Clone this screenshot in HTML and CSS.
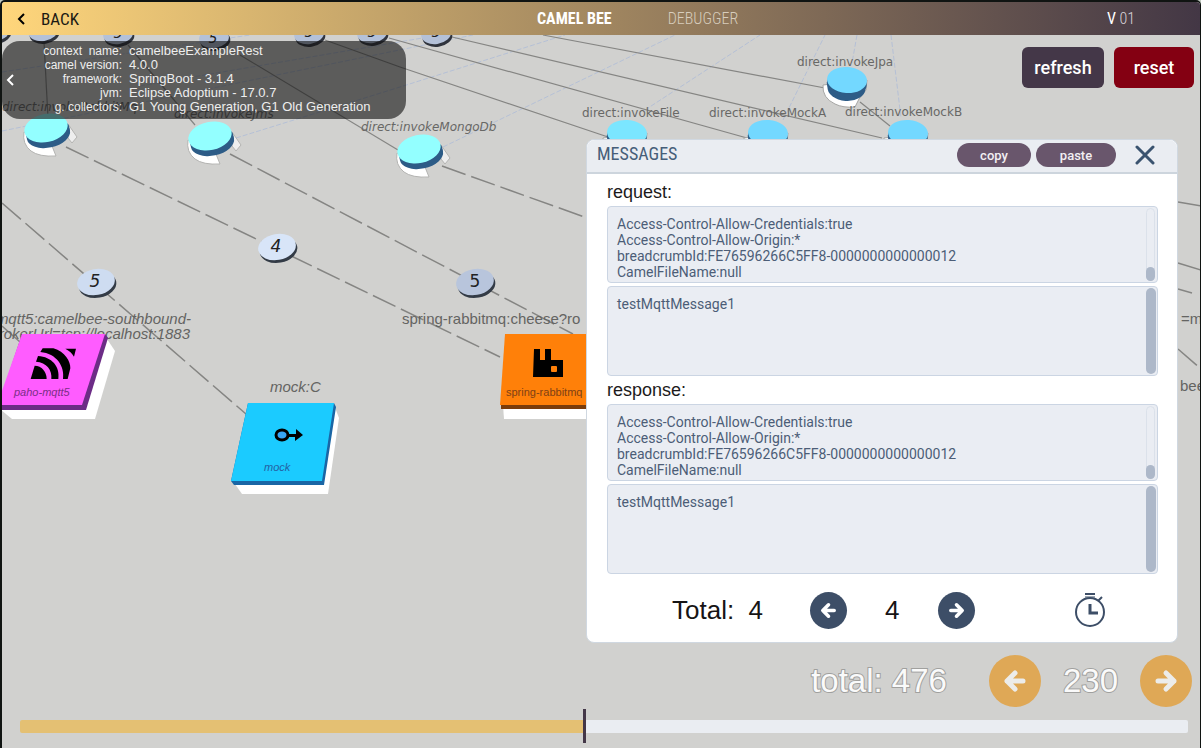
FILE: index.html
```html
<!DOCTYPE html>
<html lang="en">
<head>
<meta charset="utf-8">
<meta name="viewport" content="width=device-width, initial-scale=1">
<title>Camel Bee Debugger</title>
<link rel="stylesheet" href="styles.css">
</head>
<body>
<div class="app">
  <svg class="scene" viewBox="0 0 1201 748" preserveAspectRatio="xMidYMid slice" role="img" aria-label="Route topology">
    <defs>
      <g id="endpoint">
        <path d="M-22 4 Q-24 16 -15 23 Q-7 29 10 28 L6 18Z" fill="#fff" stroke="#b4b4b2"/>
        <path d="M22 -4 L31 9 L26 15 L22 10Z" fill="#eee" stroke="#b4b4b2"/>
        <ellipse cx="1" cy="7" rx="22" ry="13" fill="#2d5c87" transform="rotate(-12)"/>
        <ellipse cx="1" cy="4" rx="22" ry="13" fill="#2d5c87" transform="rotate(-12)"/>
        <ellipse rx="22" ry="14" transform="rotate(-12)"/>
      </g>
      <g id="endpoint-far">
        <path d="M-24 5 Q-25 18 -12 24 Q-4 28 8 27 L12 19 L19 10 L20 0Z" fill="#fff" stroke="#a5a5a3"/>
        <ellipse cy="8" rx="19" ry="13" fill="#2d5c87" transform="rotate(4)"/>
        <ellipse cy="4" rx="20" ry="13" fill="#2d5c87" transform="rotate(4)"/>
        <ellipse rx="20" ry="13" transform="rotate(4)"/>
      </g>
      <g id="counter">
        <ellipse cx="1" cy="3" rx="19" ry="13" fill="#333b46" transform="rotate(-10)"/>
        <ellipse rx="19" ry="13" transform="rotate(-10)"/>
      </g>
      <g id="counter-far">
        <ellipse cx="1" cy="3" rx="15" ry="10" fill="#30343d" transform="rotate(-8)"/>
        <ellipse rx="15" ry="10" fill="#b4c1d8" transform="rotate(-8)"/>
      </g>
    </defs>

    <g class="grid-lines">
      <path d="M2 72 L250 35"/><path d="M2 131 L473 35"/><path d="M140 86 L440 35"/>
      <path d="M236 138 L400 87 L565 35"/><path d="M443 147 L675 35"/>
      <path d="M645 110 L760 35"/><path d="M783 120 L825 35"/>
      <path d="M857 35 L852 63"/><path d="M891 35 L901 118"/>
    </g>

    <g class="links links-far">
      <path d="M44 42 L48 118"/><path d="M128 45 L195 125"/><path d="M240 55 L398 150"/>
      <path d="M325 40 L400 67 L608 137"/><path d="M389 38 L747 138"/>
      <path d="M452 37 L882 138"/><path d="M543 35 L825 88"/><path d="M860 102 L890 126"/>
    </g>
    <g class="links">
      <path d="M2 203 L246 414"/><path d="M66 147 L500 357"/>
      <path d="M230 154 L573 334"/><path d="M442 166 L590 219"/>
      <path d="M1178 202 L1201 206"/><path d="M1178 263 L1201 270"/>
      <path d="M1178 289 L1192 293"/><path d="M1178 349 L1201 369"/>
      <path d="M2 326 L20 342"/>
    </g>

    <use href="#counter-far" x="-5" y="31"/><use href="#counter-far" x="43" y="31"/>
    <use href="#counter-far" x="118" y="34"/><use href="#counter-far" x="214" y="38"/>
    <use href="#counter-far" x="309" y="34"/><use href="#counter-far" x="372" y="33"/>
    <use href="#counter-far" x="436" y="34"/>
    <g class="counter-text counter-text-far">
      <text x="118" y="38">5</text><text x="213" y="43">5</text>
      <text x="309" y="37">5</text><text x="372" y="37">5</text><text x="436" y="37">5</text>
    </g>

    <g fill="#93ffff">
      <use href="#endpoint" x="46" y="128"/><use href="#endpoint" x="210" y="136"/>
      <use href="#endpoint" x="419" y="149"/>
    </g>
    <g fill="#73d8ff">
      <use href="#endpoint-far" x="847" y="80"/><use href="#endpoint-far" x="627" y="133" fill="#7be6ff"/>
      <use href="#endpoint-far" x="768" y="133"/><use href="#endpoint-far" x="908" y="133"/>
    </g>

    <use href="#counter" x="96" y="282" fill="#cedcf1"/>
    <use href="#counter" x="277" y="247" fill="#d8e5f8"/>
    <use href="#counter" x="475" y="282" fill="#b8c5dc"/>
    <g class="counter-text">
      <text x="95" y="287" class="slanted">5</text>
      <text x="276" y="252" class="slanted">4</text>
      <text x="475" y="287">5</text>
    </g>

    <g class="route-label">
      <text x="2" y="111" class="slanted">direct:invokeRabbitMq</text>
      <text x="174" y="118" class="slanted">direct:invokeJms</text>
      <text x="361" y="131" class="slanted">direct:invokeMongoDb</text>
      <text x="582" y="117">direct:invokeFile</text>
      <text x="709" y="117">direct:invokeMockA</text>
      <text x="845" y="116">direct:invokeMockB</text>
      <text x="797" y="66">direct:invokeJpa</text>
    </g>
    <g class="tile-label">
      <text x="191" y="324" text-anchor="end" class="slanted">mqtt5:camelbee-southbound-</text>
      <text x="190" y="339" text-anchor="end" class="slanted">brokerUrl=tcp://localhost:1883</text>
      <text x="270" y="392" class="slanted">mock:C</text>
      <text x="402" y="324">spring-rabbitmq:cheese?ro</text>
      <text x="1181" y="324">=m</text>
      <text x="1180" y="391">bee</text>
    </g>

    <path d="M105 336 L115 351 L95 419 L12 419 L0 409Z" fill="#fff"/>
    <path d="M22 334 H105 L108 338 L86 410 H0 V400Z" fill="#6c2c86"/>
    <path d="M22 334 H105 L82 405 H-3Z" fill="#ff5cff"/>
    <g transform="translate(0 180) scale(.3333)">
      <path d="M92 597 L104 557 C125 557 140 575 140 597Z"/>
      <path d="M114 528 C155 530 181 560 175 597 H154 C157 570 140 547 108 545Z"/>
      <path d="M128 505 H160 C195 515 212 545 211 565 L203 597 H189 C195 560 170 520 121 516Z"/>
      <path d="M196 506 H228 L222 530 C217 520 208 513 196 506Z"/>
    </g>
    <text x="14" y="396" class="tile-name" fill="#7a2f86">paho-mqtt5</text>

    <path d="M334 405 L339 418 L328 494 H242 L235 484Z" fill="#fff"/>
    <path d="M248 403 H334 L336 407 L324 485 H234 L231 481Z" fill="#1a66a5"/>
    <path d="M248 403 H334 L322 481 H231Z" fill="#1bcbff"/>
    <ellipse cx="282" cy="435" rx="6" ry="5" fill="#37a5f5" stroke="#000" stroke-width="3"/>
    <path d="M288 434 H296 V429 L303 435 L295 441 V437 H288Z"/>
    <text x="264" y="471" class="tile-name" fill="#2462a4">mock</text>

    <path d="M503 405 H600 V419 H504Z" fill="#fff"/>
    <path d="M501 404 H600 V409 H501Z" fill="#7b3c0a"/>
    <path d="M505 334 H600 V405 H500Z" fill="#ff8009"/>
    <path d="M534 349 H540 V360 H545 V349 H551 V360 H563 V377 H533Z"/>
    <rect x="551" y="366" width="6" height="6" rx="1" fill="#ff8009"/>
    <text x="506" y="396" class="tile-name upright" fill="#7e4116">spring-rabbitmq</text>
  </svg>

  <header class="topbar">
    <a class="back" href="#">
      <svg width="10" height="14" viewBox="0 0 10 14" aria-hidden="true"><path d="M8 2 L3 7 L8 12" fill="none" stroke="#000" stroke-width="2"/></svg>
      BACK
    </a>
    <nav class="tabs">
      <a class="tab tab-active" href="#">CAMEL BEE</a>
      <a class="tab" href="#">DEBUGGER</a>
    </nav>
    <div class="version"><b>V</b> 01</div>
  </header>

  <main class="stage">
    <div class="toolbar">
      <section class="context">
        <button class="collapse" aria-label="Collapse">
          <svg width="10" height="14" viewBox="0 0 10 14" aria-hidden="true"><path d="M8 2 L3 7 L8 12" fill="none" stroke="#fff" stroke-width="2"/></svg>
        </button>
        <dl class="facts">
          <dt>context&nbsp; name:</dt><dd>camelbeeExampleRest</dd>
          <dt>camel version:</dt><dd>4.0.0</dd>
          <dt>framework:</dt><dd>SpringBoot - 3.1.4</dd>
          <dt>jvm:</dt><dd>Eclipse Adoptium - 17.0.7</dd>
          <dt>g. collectors:</dt><dd>G1 Young Generation, G1 Old Generation</dd>
        </dl>
      </section>
      <div class="actions">
        <button class="action">refresh</button>
        <button class="action action-danger">reset</button>
      </div>
    </div>

    <section class="messages" aria-labelledby="messages-title">
      <div class="messages-head">
        <h2 id="messages-title">MESSAGES</h2>
        <button class="pill">copy</button>
        <button class="pill pill-wide">paste</button>
        <button class="close" aria-label="Close">
          <svg width="20" height="20" viewBox="0 0 20 20" aria-hidden="true"><path d="M2 2 L18 18 M18 2 L2 18" fill="none" stroke="#3a536f" stroke-width="3" stroke-linecap="round"/></svg>
        </button>
      </div>
      <div class="messages-body">
        <label for="request-headers">request:</label>
        <div class="field">
          <textarea id="request-headers" class="headers" readonly>Access-Control-Allow-Credentials:true
Access-Control-Allow-Origin:*
breadcrumbId:FE76596266C5FF8-0000000000000012
CamelFileName:null</textarea>
          <span class="scroll-track"></span>
          <span class="scroll scroll-end"></span>
        </div>
        <div class="field">
          <textarea class="payload" aria-label="request body" readonly>testMqttMessage1</textarea>
          <span class="scroll scroll-full"></span>
        </div>
        <label for="response-headers">response:</label>
        <div class="field">
          <textarea id="response-headers" class="headers" readonly>Access-Control-Allow-Credentials:true
Access-Control-Allow-Origin:*
breadcrumbId:FE76596266C5FF8-0000000000000012
CamelFileName:null</textarea>
          <span class="scroll-track"></span>
          <span class="scroll scroll-end"></span>
        </div>
        <div class="field">
          <textarea class="payload" aria-label="response body" readonly>testMqttMessage1</textarea>
          <span class="scroll scroll-full"></span>
        </div>
      </div>
      <div class="messages-foot">
        <span class="total">Total:&nbsp; 4</span>
        <button class="round" aria-label="Previous message">
          <svg viewBox="0 0 52 52" aria-hidden="true"><path d="M34 26 H18 M26 18 L18 26 L26 34" /></svg>
        </button>
        <span>4</span>
        <button class="round" aria-label="Next message">
          <svg viewBox="0 0 52 52" aria-hidden="true"><path d="M18 26 H34 M26 18 L34 26 L26 34" /></svg>
        </button>
        <button class="timer" aria-label="Timing">
          <svg width="32" height="36" viewBox="0 0 32 36" aria-hidden="true" fill="none" stroke="#3d4e67"><circle cx="16" cy="20" r="14" stroke-width="2"/><path d="M11 2 H21 M24 9 L28 5" stroke-width="2"/><path d="M11 5 H21" stroke-width="1"/><path d="M16 12 V21 H24" stroke-width="3"/></svg>
        </button>
      </div>
    </section>
  </main>

  <footer class="timeline">
    <div class="stepper">
      <span class="outlined">total: 476</span>
      <button class="round round-large" aria-label="Previous step">
        <svg viewBox="0 0 52 52" aria-hidden="true"><path d="M34 26 H18 M26 18 L18 26 L26 34" /></svg>
      </button>
      <span class="outlined">230</span>
      <button class="round round-large" aria-label="Next step">
        <svg viewBox="0 0 52 52" aria-hidden="true"><path d="M18 26 H34 M26 18 L34 26 L26 34" /></svg>
      </button>
    </div>
    <input class="seek" type="range" min="0" max="476" value="230" aria-label="Timeline position" style="--done: 48.3%">
  </footer>
</div>
</body>
</html>
```
FILE: styles.css
```css
* { box-sizing: border-box; }

body {
  margin: 0;
  background: #c3ccc2;
  font-family: "Liberation Sans", Arial, sans-serif;
}

button {
  border: 0;
  padding: 0;
  background: none;
  color: inherit;
  font-family: Roboto, sans-serif;
  cursor: pointer;
}

button svg { display: block; }
a { color: inherit; text-decoration: none; }

.app {
  position: relative;
  display: flex;
  flex-direction: column;
  min-height: 100vh;
  overflow: hidden;
  border: solid #101412;
  border-width: 2px 1px 0 2px;
  border-radius: 5px 5px 0 0;
  background: #d1d1cf;
}

/* Route topology */
.scene {
  position: absolute;
  top: -2px;
  left: -2px;
  width: 100vw;
  height: 100vh;
}

.grid-lines path { fill: none; stroke: #b5c0d6; stroke-dasharray: 5 2; }
.links path { fill: none; stroke: #858583; stroke-width: 1.5; stroke-dasharray: 25 6; }
.links-far path { stroke-dasharray: none; stroke-width: 1.2; }

.counter-text { font: 17px "DejaVu Sans", sans-serif; fill: #222; text-anchor: middle; }
.counter-text-far { font-size: 14px; font-style: italic; }
.route-label { font: 12px "DejaVu Sans", sans-serif; fill: #686866; }
.tile-label { font-size: 15px; fill: #646462; }
.slanted { font-style: italic; }
.tile-name { font-size: 11px; font-style: italic; }
.tile-name.upright { font-style: normal; }

/* Top bar */
.topbar {
  position: relative;
  display: grid;
  grid-template-columns: 535fr 570fr 93fr;
  align-items: center;
  height: 33px;
  background: linear-gradient(90deg, #ffd67b, #433745);
  color: #fff;
  font: 16px "Roboto Condensed", Roboto, sans-serif;
}

.back { display: flex; align-items: center; gap: 15px; padding-left: 14px; color: #1b1913; font-size: 17px; }
.tabs { display: flex; gap: 56px; }
.tab { color: #d8cdbd; font-weight: 300; }
.tab-active { color: #fff; font-weight: 700; }
.version { color: #d9d4d9; font-weight: 300; }
.version b { color: #fff; }

/* Stage */
.stage { position: relative; display: flex; flex-direction: column; flex: 1; }

.toolbar {
  display: flex;
  justify-content: space-between;
  align-items: flex-start;
  padding: 6px 6px 0 0;
}

.context {
  display: flex;
  align-items: center;
  width: 404px;
  height: 78px;
  border-radius: 18px;
  background: rgba(20, 20, 20, .62);
  color: #eee;
}

.collapse { flex: none; padding-left: 3px; }

.facts {
  display: grid;
  grid-template-columns: 107px auto;
  column-gap: 7px;
  margin: 0;
  padding-bottom: 2px;
  font-size: 13px;
  line-height: 14px;
  white-space: nowrap;
}

.facts dt { text-align: right; font-size: 12px; }
.facts dd { margin: 0; }

.actions { display: flex; gap: 10px; padding-top: 6px; }

.action {
  min-width: 82px;
  height: 41px;
  border-radius: 6px;
  background: #443748;
  color: #fff;
  font-size: 18px;
  font-weight: 500;
}

.action-danger { min-width: 80px; background: #840012; }

/* Messages window */
.messages {
  align-self: flex-end;
  width: 592px;
  max-width: 96vw;
  margin: 20px 22px 0 0;
  border: 1px solid #d0d8e1;
  border-radius: 8px;
  background: #fff;
}

.messages-head {
  display: flex;
  align-items: center;
  gap: 5px;
  height: 34px;
  padding: 0 22px 2px 10px;
  border-bottom: 2px solid #cdd5dd;
  border-radius: 8px 8px 0 0;
  background: #eaedf2;
}

.messages-head h2 {
  flex: 1;
  margin: 0;
  padding-bottom: 4px;
  color: #465e79;
  font: 18px "Roboto Condensed", Roboto, sans-serif;
}

.pill {
  min-width: 74px;
  height: 24px;
  border-radius: 12px;
  background: #69566c;
  color: #f2eff3;
  font-size: 13px;
  font-weight: 500;
}

.pill-wide { min-width: 80px; }
.close { margin-left: 14px; }

.messages-body { padding: 4px 19px 0 20px; }

.messages-body label {
  display: block;
  color: #1c1a1b;
  font-size: 18px;
  line-height: 28px;
}

.field { position: relative; }
.field + .field { margin-top: 3px; }

textarea {
  display: block;
  width: 100%;
  padding: 9px 28px 0 9px;
  overflow: hidden;
  resize: none;
  border: 1px solid #cbd5e3;
  border-radius: 4px;
  background: #eaedf3;
  color: #4c5d77;
  font: 14px/16px Roboto, sans-serif;
}

.headers { height: 77px; }
.payload { height: 90px; }

.scroll,
.scroll-track { position: absolute; border-radius: 6px; }
.scroll { background: #adb8c9; }
.scroll-track { right: 3px; top: 2px; bottom: 2px; width: 9px; border: 1px solid #dbe1ea; }
.scroll-end { right: 3px; bottom: 2px; width: 9px; height: 14px; }
.scroll-full { right: 2px; top: 2px; bottom: 2px; width: 10px; }

.messages-foot {
  display: flex;
  align-items: center;
  gap: 38px;
  min-height: 68px;
  padding: 4px 71px 0 85px;
  color: #161415;
  font-size: 26px;
}

.total { margin-right: 9px; }
.timer { margin-left: auto; }

.round {
  flex: none;
  width: 37px;
  height: 37px;
  border-radius: 50%;
  background: #3d4e67;
}

.round path {
  fill: none;
  stroke: #fff;
  stroke-width: 5;
  stroke-linecap: round;
  stroke-linejoin: round;
}

.round-large { width: 52px; height: 52px; background: #dfa856; }
.round-large path { stroke: #ececea; }

/* Timeline */
.timeline { position: relative; padding: 12px 12px 6px 18px; }

.stepper {
  display: flex;
  justify-content: flex-end;
  align-items: center;
  gap: 22px;
  padding-bottom: 2px;
  margin-right: -4px;
}

.outlined {
  color: #fafafa;
  font-size: 33px;
  -webkit-text-stroke: 2px #a0a09e;
  paint-order: stroke fill;
}

.outlined:first-child { margin-right: 20px; }

.seek {
  display: block;
  width: 100%;
  height: 34px;
  margin: 0;
  appearance: none;
  background: none;
}

.seek::-webkit-slider-runnable-track {
  height: 13px;
  border-radius: 2px;
  background: linear-gradient(90deg, #e4c073 var(--done), #eaedf2 var(--done));
}

.seek::-webkit-slider-thumb {
  appearance: none;
  width: 3px;
  height: 34px;
  margin-top: -11px;
  background: #443748;
}
```
